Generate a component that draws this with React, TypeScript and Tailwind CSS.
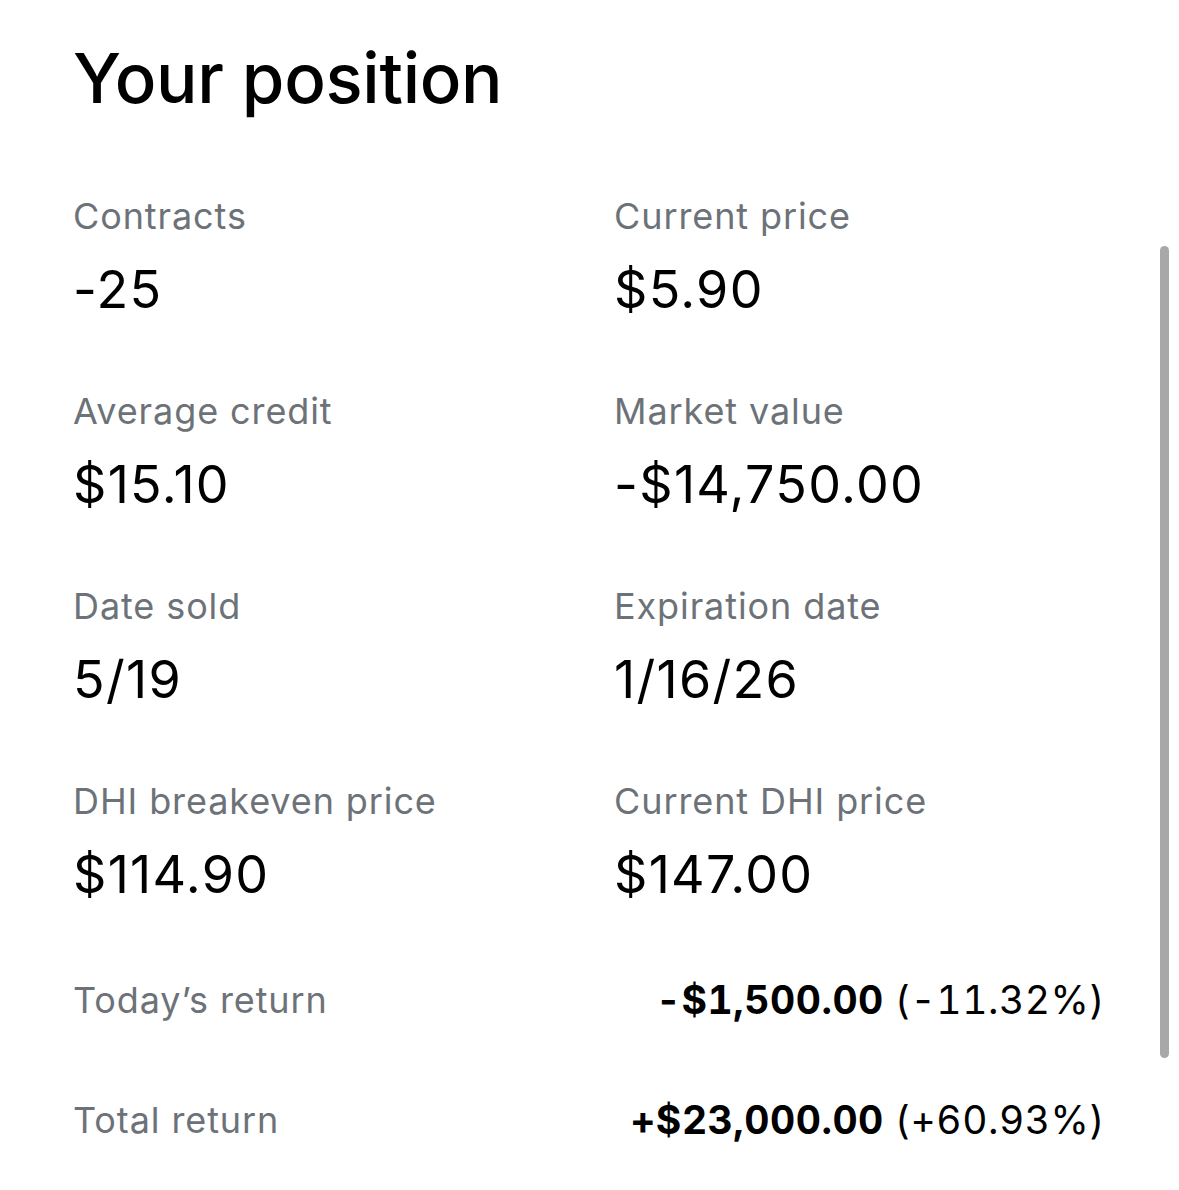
import React from 'react';

const items = [
  { label: 'Contracts', value: '-25' },
  { label: 'Current price', value: '$5.90' },
  { label: 'Average credit', value: '$15.10' },
  { label: 'Market value', value: '-$14,750.00' },
  { label: 'Date sold', value: '5/19' },
  { label: 'Expiration date', value: '1/16/26' },
  { label: 'DHI breakeven price', value: '$114.90' },
  { label: 'Current DHI price', value: '$147.00' },
];

const returns = [
  { label: 'Today\u2019s return', amount: '-$1,500.00', pct: '(-11.32%)' },
  { label: 'Total return', amount: '+$23,000.00', pct: '(+60.93%)' },
];

export default function App() {
  return (
    <div
      className="relative w-[1179px] h-[1190px] bg-white overflow-hidden pl-[73px] pr-[74px] pt-[33px]"
      style={{ fontFamily: 'Inter, "Noto Sans", sans-serif' }}
    >
      <h1 className="text-[69px] leading-[90px] font-medium text-black tracking-[-0.3px]">Your position</h1>

      <div className="grid grid-cols-[541px_1fr] mt-[71px] gap-y-[69px]">
        {items.map((it) => (
          <div key={it.label} className="flex flex-col">
            <span className="text-[36px] leading-[44px] tracking-[0.9px] text-[#6d7278]">{it.label}</span>
            <span className="text-[52px] leading-[60px] mt-[22px] tracking-[1.3px] text-black">{it.value}</span>
          </div>
        ))}
      </div>

      <div className="flex flex-col mt-[73px] gap-[76px]">
        {returns.map((r) => (
          <div key={r.label} className="flex items-center justify-between">
            <span className="text-[36px] leading-[44px] tracking-[0.9px] text-[#6d7278]">{r.label}</span>
            <span className="text-[39px] leading-[44px] tabular-nums tracking-[0.5px] text-black">
              <span className="font-bold">{r.amount}</span> {r.pct}
            </span>
          </div>
        ))}
      </div>

      <div className="absolute left-[1160px] top-[246px] w-[9px] h-[812px] rounded-full bg-[#a8a8a8]" />
    </div>
  );
}
